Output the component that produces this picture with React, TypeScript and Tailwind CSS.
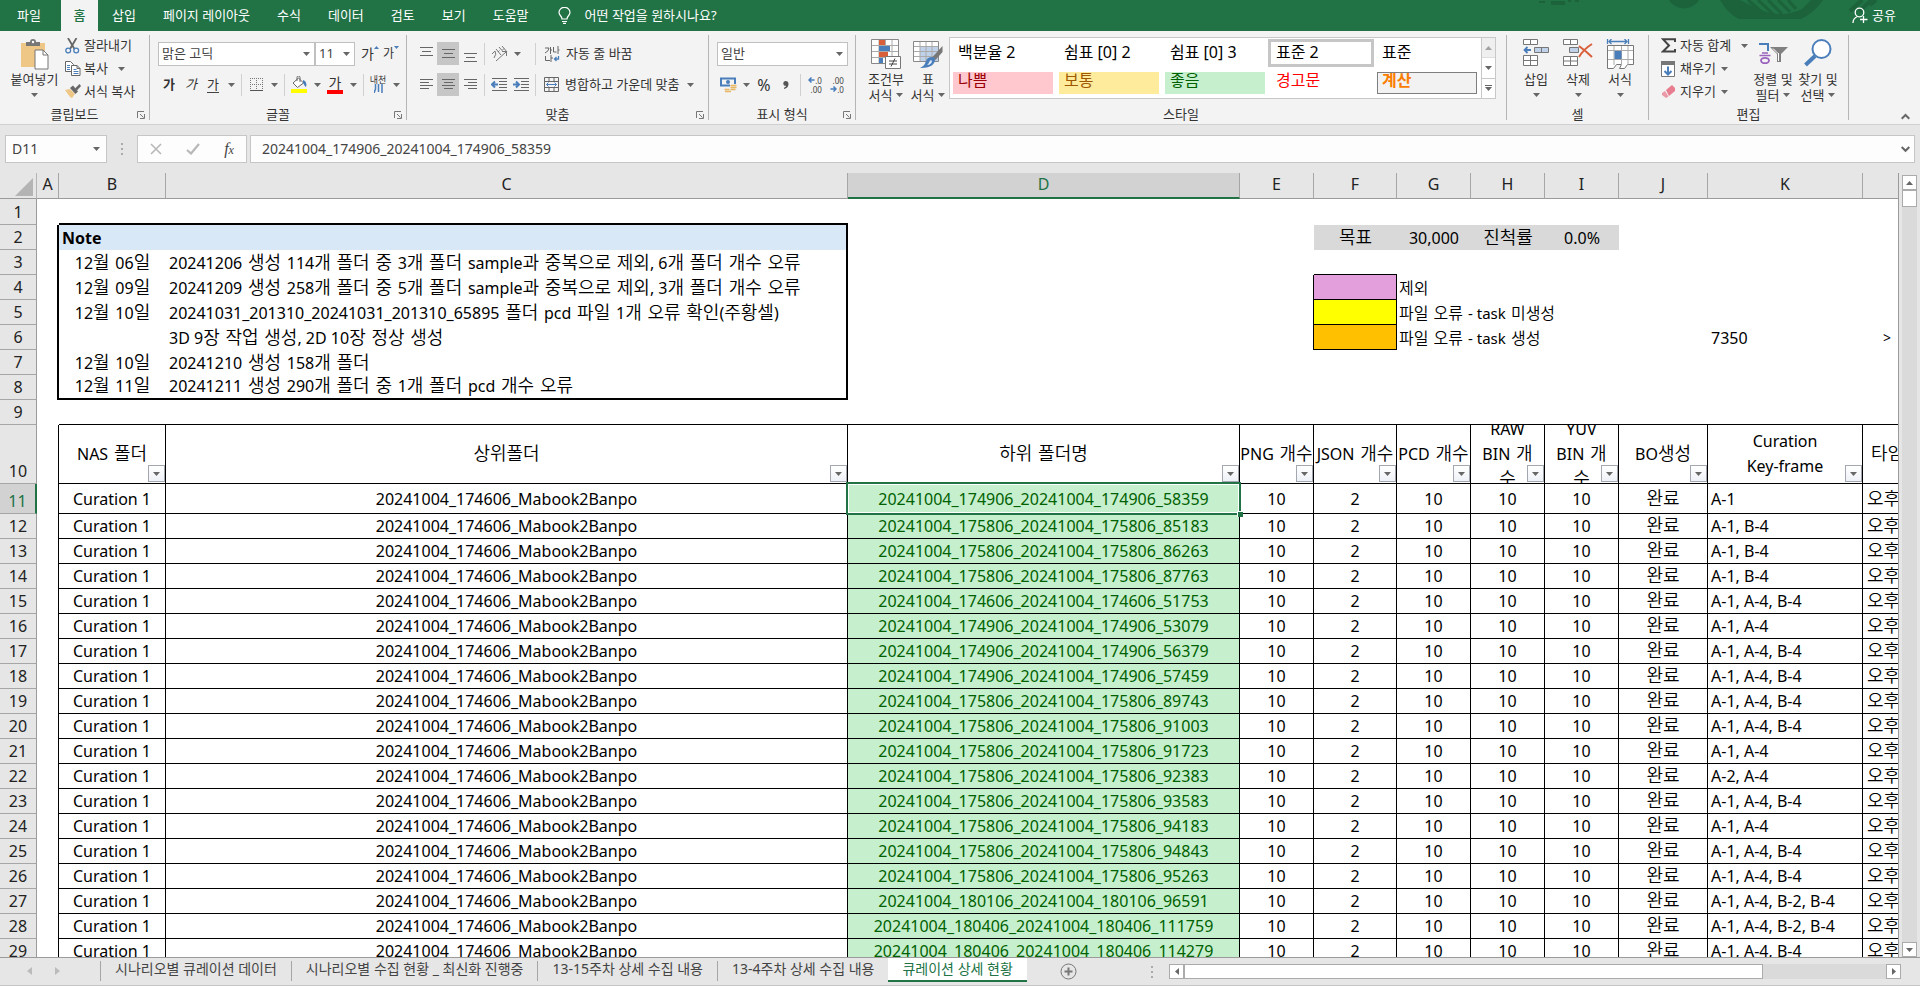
import type { ReactNode } from 'react';

const noteRows: [string, string][] = [
  ['12월 06일', '20241206 생성 114개 폴더 중 3개 폴더 sample과 중복으로 제외, 6개 폴더 개수 오류'],
  ['12월 09일', '20241209 생성 258개 폴더 중 5개 폴더 sample과 중복으로 제외, 3개 폴더 개수 오류'],
  ['12월 10일', '20241031_201310_20241031_201310_65895 폴더 pcd 파일 1개 오류 확인(주황셀)'],
  ['', '3D 9장 작업 생성, 2D 10장 정상 생성'],
  ['12월 10일', '20241210 생성 158개 폴더'],
  ['12월 11일', '20241211 생성 290개 폴더 중 1개 폴더 pcd 개수 오류'],
];

const dataRows: [string, string][] = [
  ['20241004_174906_20241004_174906_58359', 'A-1'],
  ['20241004_175806_20241004_175806_85183', 'A-1, B-4'],
  ['20241004_175806_20241004_175806_86263', 'A-1, B-4'],
  ['20241004_175806_20241004_175806_87763', 'A-1, B-4'],
  ['20241004_174606_20241004_174606_51753', 'A-1, A-4, B-4'],
  ['20241004_174906_20241004_174906_53079', 'A-1, A-4'],
  ['20241004_174906_20241004_174906_56379', 'A-1, A-4, B-4'],
  ['20241004_174906_20241004_174906_57459', 'A-1, A-4, B-4'],
  ['20241004_175806_20241004_175806_89743', 'A-1, A-4, B-4'],
  ['20241004_175806_20241004_175806_91003', 'A-1, A-4, B-4'],
  ['20241004_175806_20241004_175806_91723', 'A-1, A-4'],
  ['20241004_175806_20241004_175806_92383', 'A-2, A-4'],
  ['20241004_175806_20241004_175806_93583', 'A-1, A-4, B-4'],
  ['20241004_175806_20241004_175806_94183', 'A-1, A-4'],
  ['20241004_175806_20241004_175806_94843', 'A-1, A-4, B-4'],
  ['20241004_175806_20241004_175806_95263', 'A-1, A-4, B-4'],
  ['20241004_180106_20241004_180106_96591', 'A-1, A-4, B-2, B-4'],
  ['20241004_180406_20241004_180406_111759', 'A-1, A-4, B-2, B-4'],
  ['20241004_180406_20241004_180406_114279', 'A-1, A-4, B-4'],
];

const headers: string[][] = [
  ['NAS 폴더'],
  ['상위폴더'],
  ['하위 폴더명'],
  ['PNG 개수'],
  ['JSON 개수'],
  ['PCD 개수'],
  ['RAW', 'BIN 개', '수'],
  ['YUV', 'BIN 개', '수'],
  ['BO생성'],
  ['Curation', 'Key-frame'],
];

/* Hangul runs are set a little larger than the Latin text beside them. */
function Mixed({ text, size = 'text-[18px]' }: { text: string; size?: string }) {
  return (
    <span className="whitespace-pre">
      {text.split(/([가-힣 ]*[가-힣][가-힣 ]*)/).map((part, i) =>
        i % 2 ? (
          <span key={i} lang="ko" className={`font-['DejaVu_Sans','Noto_Sans_CJK_KR',sans-serif] leading-none font-[350] ${size}`}>
            {part}
          </span>
        ) : (
          part
        ),
      )}
    </span>
  );
}

function Caret({ up = false }: { up?: boolean }) {
  return (
    <svg width="7" height="4" viewBox="0 0 7 4" className="shrink-0" aria-hidden="true">
      <path d={up ? 'M0 4h7L3.5 0z' : 'M0 0h7L3.5 4z'} fill="#666" />
    </svg>
  );
}

function SizeMark({ up = false }: { up?: boolean }) {
  return (
    <svg width="5" height="3" viewBox="0 0 5 3" className="mt-1 shrink-0" aria-hidden="true">
      <path d={up ? 'M0 3h5L2.500 0z' : 'M0 0h5L2.500 3z'} fill="#4a7ebb" />
    </svg>
  );
}

function Launcher() {
  return (
    <svg width="8" height="8" viewBox="0 0 8 8" fill="none" stroke="#777" aria-hidden="true">
      <path d="M.5 7V.5H7M3 3l3.5 3.5M7.5 3v4.500H3" />
    </svg>
  );
}

function Group({ label, launcher, width, children }: { label: string; launcher?: boolean; width: string; children: ReactNode }) {
  return (
    <>
      <section aria-label={label} className={`flex shrink-0 flex-col ${width}`}>
        <div className="flex h-[74px]">{children}</div>
        <div className="flex h-[19px] items-center leading-[19px]">
          <span className="w-4" />
          <span className="flex-1 text-center">{label}</span>
          <span className="flex w-4 justify-center">
            {launcher && (
              <button type="button" aria-label={`${label} 설정`}>
                <Launcher />
              </button>
            )}
          </span>
        </div>
      </section>
      <div className="my-1 w-px shrink-0 bg-[#b5b5b5]" />
    </>
  );
}

function Tool({ label, active, children }: { label: string; active?: boolean; children: ReactNode }) {
  return (
    <button
      type="button"
      aria-label={label}
      className={`flex h-[23px] w-[22px] shrink-0 items-center justify-center ${active ? 'bg-[#c6c6c6]' : ''}`}
    >
      {children}
    </button>
  );
}

function Drop({ label }: { label: string }) {
  return (
    <button type="button" aria-label={label} className="flex h-[23px] w-[14px] shrink-0 items-center justify-center">
      <Caret />
    </button>
  );
}

function Rule() {
  return <span className="mx-[3px] h-[22px] w-px shrink-0 bg-[#d0d0d0]" />;
}

function BigButton({ lines, width, children, inlineCaret }: { lines: string[]; width: string; children: ReactNode; inlineCaret?: boolean }) {
  return (
    <button type="button" className={`flex shrink-0 flex-col items-center pt-2 leading-[16px] whitespace-nowrap ${width}`}>
      <span className="flex h-[32px] items-start justify-center">{children}</span>
      <span>{lines[0]}</span>
      <span className="flex h-[16px] items-center gap-1">
        {inlineCaret && lines[1]}
        <Caret />
      </span>
    </button>
  );
}

function SmallButton({ text, icon, caret }: { text: string; icon: ReactNode; caret?: string }) {
  return (
    <button type="button" className="flex h-[23px] items-center whitespace-nowrap">
      <span className="flex w-[19px] shrink-0 justify-start">{icon}</span>
      <span>{text}</span>
      {caret && (
        <span className={caret}>
          <Caret />
        </span>
      )}
    </button>
  );
}

function Lines({ rows }: { rows: [number, number, number][] }) {
  return (
    <svg width="15" height="16" viewBox="0 0 15 16" stroke="#666" aria-hidden="true">
      {rows.map(([y, a, b], i) => (
        <path key={i} d={`M${a} ${y + 0.5}H${b}`} />
      ))}
    </svg>
  );
}

function PasteIcon() {
  return (
    <svg width="30" height="31" viewBox="0 0 30 31" aria-hidden="true">
      <path d="M1 4h24v24H1z" fill="#eec685" />
      <path d="M6 7V3h4a3 3 0 0 1 6 0h4v4z" fill="#777" />
      <circle cx="13" cy="3" r="1.200" fill="#fff" />
      <path d="M15 11h8l5 5v14H15z" fill="#fff" stroke="#777" />
      <path d="M23 11v5h5" fill="none" stroke="#777" />
    </svg>
  );
}

function CutIcon() {
  return (
    <svg width="15" height="16" viewBox="0 0 15 16" fill="none" aria-hidden="true">
      <path d="M3 0l6.500 11M11.500 0L5 11" stroke="#666" strokeWidth="1.800" />
      <circle cx="3.200" cy="12.500" r="2.400" stroke="#4a7ebb" strokeWidth="1.300" />
      <circle cx="11.200" cy="12.500" r="2.400" stroke="#4a7ebb" strokeWidth="1.300" />
    </svg>
  );
}

function CopyIcon() {
  return (
    <svg width="16" height="15" viewBox="0 0 16 15" aria-hidden="true">
      <path d="M.5.500h5l3 3v7h-8z" fill="#fff" stroke="#666" />
      <path d="M2 4.500h3M2 6.500h3M2 8.500h3" stroke="#4a7ebb" />
      <path d="M6.500 4.500h5.500l3 3v7H6.500z" fill="#fff" stroke="#666" />
      <path d="M12 4.500v3h3" fill="none" stroke="#666" />
      <path d="M8.500 8.500h3M8.500 10.500h5M8.500 12.500h5" stroke="#4a7ebb" />
    </svg>
  );
}

function BrushIcon() {
  return (
    <svg width="17" height="15" viewBox="0 0 17 15" aria-hidden="true">
      <path d="M0 6l5-1 5 5-3 4-2-1z" fill="#eec685" />
      <path d="M5 4l3-2.500 5 6-2.500 2.500z" fill="#666" />
      <path d="M10 4.500L14.500 0 16 2l-4 4.500z" fill="#666" />
    </svg>
  );
}

function CondIcon() {
  return (
    <svg width="31" height="31" viewBox="0 0 31 31" aria-hidden="true">
      <path d="M.5.500h27v24H.5z" fill="#fff" stroke="#888" />
      <path d="M8 1v23M14.500 1v23M21 1v23M1 6.500h26M1 12.500h26M1 18.500h26" stroke="#aaa" />
      <path d="M8 1h6v5H8zM8 13h9v5H8z" fill="#d95f3b" />
      <path d="M8 7h11v5H8zM8 19h4v5H8z" fill="#4a7ebb" />
      <path d="M14.500 17.500h15v12h-15z" fill="#fff" stroke="#777" />
      <path d="M18 22h8M18 25h8M24 19.500l-4 8" stroke="#444" />
    </svg>
  );
}

function TableIcon() {
  return (
    <svg width="30" height="30" viewBox="0 0 30 30" aria-hidden="true">
      <path d="M.5 2.500h25v20H.5z" fill="#fff" stroke="#888" />
      <path d="M7 7h18v15H7z" fill="#bfd2ea" />
      <path d="M7 3v19M13 3v19M19 3v19M1 7.500h24M1 12.500h24M1 17.500h24" stroke="#aaa" />
      <path d="M29.500 7v6l-7 8-3-3z" fill="#777" />
      <path d="M19 18c3 0 4 3 2 6-2 4-8 5-14 5 4-2 5-4 6-7 1-3 3-4 6-4z" fill="#4a7ebb" />
      <path d="M14 26c2-1 2-4 4-5l1 1c0 2-2 4-5 4z" fill="#dce8f5" />
    </svg>
  );
}

function InsertIcon() {
  return (
    <svg width="28" height="28" viewBox="0 0 28 28" fill="#fff" stroke="#777" aria-hidden="true">
      <path d="M1.500.500h14v5h-14zM8.500.500v5M1.500 16.500h14v10h-14zM1.500 21.500h14M8.500 16.500v10" />
      <path d="M12.500 8.500h14v5h-14zM19.500 8.500v5" fill="#bfd2ea" />
      <path d="M9 11H3M5.500 8L2.500 11l3 3" fill="none" stroke="#4a7ebb" strokeWidth="1.800" />
    </svg>
  );
}

function DeleteIcon() {
  return (
    <svg width="30" height="28" viewBox="0 0 30 28" fill="#fff" stroke="#777" aria-hidden="true">
      <path d="M.5.500h14v5H.5zM7.500.500v5M.5 17.500h14v9H.5zM.5 22h14M7.500 17.500v9" />
      <path d="M6.500 8.500h9v5h-9z" fill="#bfd2ea" />
      <path d="M16 7c4 3 8 6 13 11M29 5c-5 3-10 8-13 13" fill="none" stroke="#d95f3b" strokeWidth="2" />
    </svg>
  );
}

function FormatIcon() {
  return (
    <svg width="29" height="31" viewBox="0 0 29 31" fill="none" aria-hidden="true">
      <path d="M1.500 0v5M22.500 0v5M3 2.500h18M5.500 0L3 2.500 5.500 5M18.500 0L21 2.500 18.500 5" stroke="#4a7ebb" strokeWidth="1.300" />
      <path d="M1.500 6.500h26v19h-6l-3 4h-5l2-4h-5l-3 4h-6z" fill="#fff" stroke="#777" />
      <path d="M8 7v19M15.500 7v19M22 7v19M2 11.500h25M2 20.500h25" stroke="#aaa" />
      <path d="M8.500 12h7v8h-7z" fill="#4a7ebb" />
    </svg>
  );
}

function SortIcon() {
  return (
    <svg width="30" height="30" viewBox="0 0 30 30" fill="none" aria-hidden="true">
      <path d="M1 5h9v7" stroke="#4a7ebb" strokeWidth="2" />
      <path d="M4 14h6M1.500 16.500h11" stroke="#9a63bd" strokeWidth="1.600" />
      <ellipse cx="7" cy="21.500" rx="4" ry="2.700" stroke="#9a63bd" strokeWidth="1.800" />
      <path d="M12 8h18l-7 7v8h-4v-8z" fill="#808080" />
      <path d="M20.500 14v8M15 9.500l5 5" stroke="#fff" />
    </svg>
  );
}

function FindIcon() {
  return (
    <svg width="28" height="28" viewBox="0 0 28 28" fill="none" stroke="#4a7ebb" aria-hidden="true">
      <circle cx="17.500" cy="10" r="9" fill="#fff" strokeWidth="2" />
      <path d="M11 17L1.500 26" strokeWidth="4" />
    </svg>
  );
}

function WrapIcon() {
  return (
    <svg width="16" height="16" viewBox="0 0 16 16" fill="none" aria-hidden="true">
      <path d="M1 2h4q0 3-4 5M6.500 1v7M6.500 4H8M9.500 1v5h3M14 0v8M14 4h1.500M1.500 10v4.500H6M7 9v7M7 12h2" stroke="#666" />
      <path d="M14.500 10v3H11M12.500 11l-2 2 2 2" stroke="#4a7ebb" strokeWidth="1.300" />
    </svg>
  );
}

function MergeIcon() {
  return (
    <svg width="15" height="15" viewBox="0 0 15 15" fill="none" aria-hidden="true">
      <path d="M.5.500h14v14H.5zM.5 4.500h14M.5 10.500h14M5 .5v4M10 .5v4M5 10.500v4M10 10.500v4" stroke="#666" />
      <path d="M2.500 7.500h10M4.500 5.500l-2 2 2 2M10.500 5.500l2 2-2 2" stroke="#4a7ebb" />
    </svg>
  );
}

function IndentIcon({ out }: { out?: boolean }) {
  return (
    <svg width="16" height="14" viewBox="0 0 16 14" fill="none" aria-hidden="true">
      <path d="M1 .5h15M8 3.500h8M8 6.500h8M8 9.500h8M1 12.500h15" stroke="#666" />
      <path d={out ? 'M7 6.500H1.500M4 3.500l-3 3 3 3' : 'M0 6.500h5.500M3 3.500l3 3-3 3'} stroke="#4a7ebb" strokeWidth="2" />
    </svg>
  );
}

function OrientIcon() {
  return (
    <svg width="17" height="16" viewBox="0 0 17 16" fill="none" stroke="#777" aria-hidden="true">
      <path d="M1 8l3-3q2 3-1 7M5 3l5 6M7 6l1.500-1.500M8 1l3 3.500 2-2M11 0l5 6" />
      <path d="M5 15L15 6M11 5.500h4.500V10" />
    </svg>
  );
}

function MoneyIcon() {
  return (
    <svg width="17" height="16" viewBox="0 0 17 16" fill="none" aria-hidden="true">
      <path d="M1 1.500h14v7H1z" stroke="#4a7ebb" strokeWidth="2" />
      <circle cx="8" cy="5" r="2" fill="#4a7ebb" />
      <path d="M10 7h6v5h-3v3H5v-3h5z" fill="#f3f3f3" />
      <path d="M10.500 8.500h6M10.500 10.500h6M10.500 12.500h5M4.500 12.500h5M5 14.500h6" stroke="#e8b765" strokeWidth="1.500" />
    </svg>
  );
}

function DecimalIcon({ add }: { add?: boolean }) {
  const arrow = (
    <svg width="7" height="6" viewBox="0 0 7 6" fill="none" stroke="#4a7ebb" strokeWidth="1.500" aria-hidden="true">
      <path d={add ? 'M6.500 3H1.500M3.500.500L1 3l2.500 2.500' : 'M.5 3h5M3.500.500L6 3 3.500 5.500'} />
    </svg>
  );
  return (
    <span className="flex flex-col items-end text-[8px] leading-[9px] text-[#444]">
      <span className="flex items-center">
        {add && arrow}
        {add ? '.0' : '.00'}
      </span>
      <span className="flex items-center">
        {!add && arrow}
        {add ? '.00' : '.0'}
      </span>
    </span>
  );
}

function BucketIcon() {
  return (
    <svg width="17" height="17" viewBox="0 0 17 17" aria-hidden="true">
      <path d="M2 7l5.500-5 5 5-6 4.500z" fill="#fff" stroke="#666" />
      <path d="M6 5V1.500a1.500 1.500 0 0 1 3 0V6" fill="none" stroke="#666" />
      <path d="M12 4c3 1 4 4 3 7-1 0-2-3-3-4z" fill="#4a7ebb" />
      <path d="M0 13h16v4H0z" fill="#ff0" />
    </svg>
  );
}

function BorderIcon() {
  return (
    <svg width="13" height="13" viewBox="0 0 13 13" fill="none" aria-hidden="true">
      <path d="M.5 0v11M6.500 0v11M12.500 0v11M0 .5h13M0 6.500h13" stroke="#777" strokeDasharray="1 1" />
      <path d="M0 12.500h13" stroke="#555" />
    </svg>
  );
}

function TitleBar() {
  const tabs = ['삽입', '페이지 레이아웃', '수식', '데이터', '검토', '보기', '도움말'];
  return (
    <header className="relative flex h-[31px] shrink-0 items-stretch bg-[#217346] text-white">
      <svg className="absolute top-0 right-[30px] h-[20px] w-[360px]" viewBox="0 0 360 20" fill="none" stroke="#1c623b" aria-hidden="true">
        <path d="M9 2h6M22 2h12v2H22zM38 1h3M45 1h4" strokeWidth="2" />
        <circle cx="154" cy="-9" r="13" strokeWidth="9" />
        <path d="M190 0q7 13 19 19h62q13-6 22-19h-12l-9 9q-20 10-44 0l-18-9z" fill="#1c623b" stroke="none" />
        <path d="M218 0l16 14M228 0l15 14M238 0l14 14M248 0l12 12M258 0l8 9" strokeWidth="3" />
        <path d="M320 11L332 0M329 11L342 0M340 5l6-5" strokeWidth="4" />
      </svg>
      <nav className="relative flex flex-1 items-stretch whitespace-nowrap">
        <button type="button" className="w-[61px] pr-[3px]">파일</button>
        <button type="button" className="w-[37px] bg-[#f3f3f3] font-medium text-[#217346]">홈</button>
        {tabs.map((t) => (
          <button key={t} type="button" className="pr-[13px] pl-[14px]">{t}</button>
        ))}
        <button type="button" className="ml-4 flex items-center gap-[14px]">
          <svg width="13" height="17" viewBox="0 0 13 17" fill="none" stroke="#fff" strokeWidth="1.200" aria-hidden="true">
            <path d="M4 12C4 9 1 8.500 1 5.500a5.300 5 0 0 1 11 0C12 8.500 9 9 9 12zM4 14.500h5M5 16.400h3" />
          </svg>
          어떤 작업을 원하시나요?
        </button>
      </nav>
      <button type="button" className="relative flex items-center gap-1 pr-6">
        <svg width="16" height="17" viewBox="0 0 16 17" fill="none" stroke="#fff" strokeWidth="1.300" aria-hidden="true">
          <circle cx="7.500" cy="5.500" r="4.300" />
          <path d="M1 16c0-3 2-5.500 4.500-6.500M11.500 9v7M8 12.500h7.500" />
        </svg>
        공유
      </button>
    </header>
  );
}

function Select({ label, value, width }: { label: string; value: string; width: string }) {
  return (
    <div className={`relative h-[24px] shrink-0 border border-[#c0c0c0] bg-white ${width}`}>
      <select aria-label={label} defaultValue={value} className="h-full w-full appearance-none bg-transparent pl-[3px] text-[13px] text-[#444] outline-none">
        <option>{value}</option>
      </select>
      <span className="pointer-events-none absolute top-[9px] right-[4px]">
        <Caret />
      </span>
    </div>
  );
}

function StyleGallery() {
  const top = 'flex h-[22px] w-[100px] items-start pl-[5px] text-[16px] leading-[20px]';
  const low = 'flex h-[22px] w-[100px] items-start pl-[5px] text-[16px] leading-[17px]';
  return (
    <div className="mt-[6px] flex h-[62px] flex-1 border border-[#c8c8c8] bg-white">
      <div className="flex flex-1 flex-col gap-[8px] pt-[4px] pl-[3px] text-black">
        <div className="flex gap-[6px]">
          <button type="button" className={top}>백분율 2</button>
          <button type="button" className={top}>쉼표 [0] 2</button>
          <button type="button" className={top}>쉼표 [0] 3</button>
          <button type="button" className={`${top} outline-3 outline-[#c6c6c6]`}>표준 2</button>
          <button type="button" className={top}>표준</button>
        </div>
        <div className="flex gap-[6px]">
          <button type="button" className={`${low} bg-[#ffc7ce] text-[#9c0006]`}>나쁨</button>
          <button type="button" className={`${low} bg-[#ffeb9c] text-[#9c5700]`}>보통</button>
          <button type="button" className={`${low} bg-[#c6efce] text-[#006100]`}>좋음</button>
          <button type="button" className={`${low} text-[#ff0000]`}>경고문</button>
          <button type="button" className={`${low} bg-[#f2f2f2] font-bold text-[#fa7d00] outline-1 -outline-offset-1 outline-[#7f7f7f]`}>계산</button>
        </div>
      </div>
      <div className="flex w-[14px] flex-col divide-y divide-[#c8c8c8] border-l border-[#c8c8c8]">
        <button type="button" aria-label="위로" className="flex flex-1 items-center justify-center bg-[#e6e6e6] opacity-60"><Caret up /></button>
        <button type="button" aria-label="아래로" className="flex flex-1 items-center justify-center"><Caret /></button>
        <button type="button" aria-label="자세히" className="flex flex-1 flex-col items-center justify-center gap-px">
          <span className="h-px w-[7px] bg-[#666]" />
          <Caret />
        </button>
      </div>
    </div>
  );
}

function Ribbon() {
  return (
    <div className="flex h-[94px] shrink-0 border-b border-[#d0d0d0] bg-[#f3f3f3]">
      <Group label="클립보드" launcher width="w-[149px]">
        <BigButton lines={['붙여넣기']} width="w-[65px] pl-1"><PasteIcon /></BigButton>
        <div className="flex flex-col pt-[3px]">
          <SmallButton text="잘라내기" icon={<CutIcon />} />
          <SmallButton text="복사" icon={<CopyIcon />} caret="ml-[10px]" />
          <SmallButton text="서식 복사" icon={<BrushIcon />} />
        </div>
      </Group>
      <Group label="글꼴" launcher width="w-[256px]">
        <div className="flex flex-col gap-[7px] pt-[11px] pl-2">
          <div className="flex items-center">
            <Select label="글꼴 이름" value="맑은 고딕" width="w-[157px]" />
            <Select label="글꼴 크기" value="11" width="w-[40px]" />
            <button type="button" aria-label="글꼴 크게" className="ml-[6px] flex w-[22px] items-start text-[14px] leading-[24px]">
              가<SizeMark up />
            </button>
            <button type="button" aria-label="글꼴 작게" className="flex w-[20px] items-start text-[12px] leading-[24px]">
              가<SizeMark />
            </button>
          </div>
          <div className="flex items-center">
            <Tool label="굵게"><b>가</b></Tool>
            <Tool label="기울임꼴"><i>가</i></Tool>
            <Tool label="밑줄"><span className="border-b border-[#444] leading-[16px]">가</span></Tool>
            <Drop label="밑줄 종류" />
            <Rule />
            <Tool label="테두리"><BorderIcon /></Tool>
            <Drop label="테두리 종류" />
            <Rule />
            <Tool label="채우기 색"><BucketIcon /></Tool>
            <Drop label="채우기 색 선택" />
            <Tool label="글꼴 색">
              <span className="w-4 border-b-4 border-[#f00] text-center text-[14px] leading-[14px]">가</span>
            </Tool>
            <Drop label="글꼴 색 선택" />
            <Rule />
            <Tool label="윗주">
              <span className="flex flex-col items-center">
                <span className="text-[9px] leading-[8px] whitespace-nowrap">내천</span>
                <svg width="9" height="9" viewBox="0 0 9 9" fill="none" stroke="#4a7ebb" strokeWidth="1.500" aria-hidden="true">
                  <path d="M1.500 0v5L0 9M4.500 0v8M8 0v9" />
                </svg>
              </span>
            </Tool>
            <Drop label="윗주 설정" />
          </div>
        </div>
      </Group>
      <Group label="맞춤" launcher width="w-[301px]">
        <div className="flex flex-col gap-[8px] pt-[11px] pl-2">
          <div className="flex items-center">
            <Tool label="위쪽 맞춤"><Lines rows={[[1, 1, 14], [5, 3, 12], [9, 1, 14]]} /></Tool>
            <Tool label="가운데 맞춤" active><Lines rows={[[3, 1, 14], [7, 3, 12], [11, 1, 14]]} /></Tool>
            <Tool label="아래쪽 맞춤"><Lines rows={[[7, 1, 14], [11, 3, 12], [15, 1, 14]]} /></Tool>
            <Rule />
            <Tool label="방향"><OrientIcon /></Tool>
            <Drop label="방향 선택" />
            <span className="w-2" />
            <Rule />
            <button type="button" className="flex items-center gap-[6px] pl-[5px] whitespace-nowrap"><WrapIcon />자동 줄 바꿈</button>
          </div>
          <div className="flex items-center">
            <Tool label="왼쪽 맞춤"><Lines rows={[[2, 1, 14], [5, 1, 10], [8, 1, 14], [11, 1, 10]]} /></Tool>
            <Tool label="텍스트 가운데" active><Lines rows={[[2, 1, 14], [5, 3, 12], [8, 1, 14], [11, 3, 12]]} /></Tool>
            <Tool label="오른쪽 맞춤"><Lines rows={[[2, 1, 14], [5, 5, 14], [8, 1, 14], [11, 5, 14]]} /></Tool>
            <Rule />
            <Tool label="내어쓰기"><IndentIcon out /></Tool>
            <Tool label="들여쓰기"><IndentIcon /></Tool>
            <Rule />
            <button type="button" className="flex items-center gap-[6px] pr-1 pl-[5px] whitespace-nowrap"><MergeIcon />병합하고 가운데 맞춤</button>
            <Drop label="병합 종류" />
          </div>
        </div>
      </Group>
      <Group label="표시 형식" launcher width="w-[146px]">
        <div className="flex flex-col gap-[7px] pt-[11px] pl-2">
          <Select label="표시 형식" value="일반" width="w-[131px]" />
          <div className="flex items-center">
            <Tool label="회계 형식"><MoneyIcon /></Tool>
            <Drop label="회계 형식 선택" />
            <Tool label="백분율"><span className="text-[16px]">%</span></Tool>
            <Tool label="쉼표">
              <svg width="6" height="8" viewBox="0 0 6 8" aria-hidden="true">
                <path d="M2.500 0C4.500 0 5.500 1.200 5.500 3c0 2.500-1.500 4.300-4.500 5V6.800C2.500 6.300 3 5.600 3 4.800 1.500 5 .3 4 .3 2.500.3 1 1.200 0 2.500 0z" fill="#555" />
              </svg>
            </Tool>
            <Rule />
            <Tool label="자릿수 늘림"><DecimalIcon add /></Tool>
            <Tool label="자릿수 줄임"><DecimalIcon /></Tool>
          </div>
        </div>
      </Group>
      <Group label="스타일" width="w-[650px]">
        <div className="flex flex-1 pr-[10px] pl-[9px]">
          <BigButton lines={['조건부', '서식']} width="w-[42px]" inlineCaret><CondIcon /></BigButton>
          <BigButton lines={['표', '서식']} width="w-[42px]" inlineCaret><TableIcon /></BigButton>
          <StyleGallery />
        </div>
      </Group>
      <Group label="셀" width="w-[141px]">
        <div className="flex pl-2">
          <BigButton lines={['삽입']} width="w-[42px]"><InsertIcon /></BigButton>
          <BigButton lines={['삭제']} width="w-[42px]"><DeleteIcon /></BigButton>
          <BigButton lines={['서식']} width="w-[42px]"><FormatIcon /></BigButton>
        </div>
      </Group>
      <Group label="편집" width="w-[199px]">
        <div className="flex w-[90px] flex-col pt-[3px] pl-3">
          <SmallButton
            text="자동 합계"
            caret="ml-[10px]"
            icon={
              <svg width="15" height="15" viewBox="0 0 15 15" fill="none" stroke="#444" aria-hidden="true">
                <path d="M14 4V1.200H2L8 7.500l-6 6h12V11" strokeWidth="2" />
              </svg>
            }
          />
          <SmallButton
            text="채우기"
            caret="ml-[5px]"
            icon={
              <svg width="15" height="16" viewBox="0 0 15 16" aria-hidden="true">
                <path d="M.5.500h13v15H.5z" fill="#fff" stroke="#777" />
                <path d="M0 0h14v4H0z" fill="#777" />
                <path d="M7 5.500v8M3.500 10L7 13.500l3.500-3.500" fill="none" stroke="#4a7ebb" strokeWidth="2" />
              </svg>
            }
          />
          <SmallButton
            text="지우기"
            caret="ml-[5px]"
            icon={
              <svg width="15" height="13" viewBox="0 0 15 13" aria-hidden="true">
                <path d="M5 5l6-5 3 3v3L8 11z" fill="#e87d8f" />
                <path d="M4 6l3.500 5.500L5 13 1 10V8z" fill="#eb99a6" />
              </svg>
            }
          />
        </div>
        <div className="flex pl-[11px]">
          <BigButton lines={['정렬 및', '필터']} width="w-[46px]" inlineCaret><SortIcon /></BigButton>
          <BigButton lines={['찾기 및', '선택']} width="w-[44px]" inlineCaret><FindIcon /></BigButton>
        </div>
      </Group>
      <div className="flex flex-1 items-end justify-end pr-[10px] pb-1">
        <button type="button" aria-label="리본 메뉴 축소">
          <svg width="9" height="7" viewBox="0 0 9 7" fill="none" stroke="#666" strokeWidth="2" aria-hidden="true">
            <path d="M.7 5.700L4.500 2l3.800 3.700" />
          </svg>
        </button>
      </div>
    </div>
  );
}

function Dots() {
  return (
    <span className="flex flex-col gap-[3px]">
      <i className="h-[2px] w-[2px] bg-[#aaa]" />
      <i className="h-[2px] w-[2px] bg-[#aaa]" />
      <i className="h-[2px] w-[2px] bg-[#aaa]" />
    </span>
  );
}

function FormulaBar() {
  return (
    <div className="flex h-[48px] shrink-0 items-start pt-[10px] pr-[5px] pl-[5px] text-[14px]">
      <div className="flex h-[28px] w-[102px] items-center border border-[#c6c6c6] bg-[#fdfdfd] pr-[6px]">
        <input aria-label="이름 상자" defaultValue="D11" className="w-full min-w-0 bg-transparent pb-[2px] pl-[6px] text-[#444] outline-none" />
        <Caret />
      </div>
      <span className="flex h-[28px] w-[30px] items-center justify-center"><Dots /></span>
      <div className="flex h-[28px] w-[110px] items-center justify-around border border-[#c6c6c6] bg-[#fdfdfd]">
        <button type="button" aria-label="취소">
          <svg width="12" height="12" viewBox="0 0 12 12" stroke="#b8b8b8" strokeWidth="1.600" aria-hidden="true"><path d="M1 1l10 10M11 1L1 11" /></svg>
        </button>
        <button type="button" aria-label="입력">
          <svg width="14" height="12" viewBox="0 0 14 12" fill="none" stroke="#b8b8b8" strokeWidth="2.200" aria-hidden="true"><path d="M1 7l4 3.500L13 1" /></svg>
        </button>
        <button type="button" aria-label="함수 삽입" className="font-['Liberation_Serif',serif] text-[16px] text-[#444] italic">
          f<span className="text-[12px]">x</span>
        </button>
      </div>
      <div className="ml-[3px] flex h-[28px] flex-1 items-center border border-[#c6c6c6] bg-[#fdfdfd] pr-1">
        <input aria-label="수식 입력줄" defaultValue="20241004_174906_20241004_174906_58359" className="w-full bg-transparent pb-[2px] pl-[11px] text-[#444] outline-none" />
        <button type="button" aria-label="수식 입력줄 확장">
          <svg width="9" height="7" viewBox="0 0 9 7" fill="none" stroke="#666" strokeWidth="2" aria-hidden="true"><path d="M.7 1L4.500 4.800 8.300 1" /></svg>
        </button>
      </div>
    </div>
  );
}

function RowHead({ n, active }: { n: number; active?: boolean }) {
  return (
    <th
      scope="row"
      className={`border-b border-[#a6a6a6] p-0 align-bottom font-normal leading-[24px] ${
        active ? 'border-r-2 border-r-[#217346] bg-[#d2d2d2] text-[#217346]' : 'border-r border-r-[#9b9b9b] bg-[#e6e6e6] text-[#222]'
      }`}
    >
      {n}
    </th>
  );
}

/* Empty cells from the given list of class names. */
function Blank({ classes }: { classes: string[] }) {
  return (
    <>
      {classes.map((c, i) => (
        <td key={i} className={c} />
      ))}
    </>
  );
}

const blanks = (n: number) => Array.from({ length: n }, () => '');

function FilterButton({ name }: { name: string }) {
  return (
    <button
      type="button"
      aria-label={`${name} 필터`}
      className="absolute right-0 bottom-px flex h-[17px] w-[17px] items-center justify-center border border-[#a3a8b0] bg-linear-to-b from-white to-[#eef1f7]"
    >
      <Caret />
    </button>
  );
}

const cols = ['A', 'B', 'C', 'D', 'E', 'F', 'G', 'H', 'I', 'J', 'K', ''];

function Sheet() {
  const box = 'border-r border-b border-black p-0 text-center';
  return (
    <table className="w-full table-fixed border-separate border-spacing-0 bg-white text-[16px] leading-[24px] whitespace-nowrap text-black">
      <colgroup>
        <col className="w-[37px]" />
        <col className="w-[22px]" />
        <col className="w-[107px]" />
        <col className="w-[682px]" />
        <col className="w-[392px]" />
        <col className="w-[74px]" />
        <col className="w-[83px]" />
        <col className="w-[74px]" />
        <col className="w-[74px]" />
        <col className="w-[74px]" />
        <col className="w-[89px]" />
        <col className="w-[155px]" />
        <col />
      </colgroup>
      <thead>
        <tr className="h-[26px]">
          <th aria-label="모두 선택" className="border-r border-b border-r-[#b5b5b5] border-b-[#9b9b9b] bg-[#e6e6e6] p-0">
            <svg width="18" height="18" viewBox="0 0 18 18" className="mt-[3px] ml-[15px]" aria-hidden="true">
              <path d="M18 0v18H0z" fill="#b4b4b4" />
            </svg>
          </th>
          {cols.map((c, i) => (
            <th
              key={i}
              scope="col"
              className={`p-0 align-top font-normal leading-[22px] ${
                c === 'D'
                  ? 'border-r border-b-2 border-r-[#a6a6a6] border-b-[#217346] bg-[#d2d2d2] text-[#217346]'
                  : c === ''
                    ? 'border-b border-[#9b9b9b] bg-[#e6e6e6]'
                    : 'border-r border-b border-r-[#a6a6a6] border-b-[#9b9b9b] bg-[#e6e6e6] text-[#222]'
              }`}
            >
              {c}
            </th>
          ))}
        </tr>
      </thead>
      <tbody>
        <tr className="h-[26px]">
          <RowHead n={1} />
          <Blank classes={['', 'border-b-2 border-black', 'border-b-2 border-black', ...blanks(9)]} />
        </tr>
        <tr className="h-[25px]">
          <RowHead n={2} />
          <td className="border-r-2 border-black" />
          <td colSpan={2} className="border-r-2 border-black bg-[#d9e8f7] p-0 pl-[3px] font-bold">Note</td>
          <Blank classes={blanks(2)} />
          <td className="bg-[#d9d9d9] p-0 text-center"><Mixed text="목표" /></td>
          <td className="bg-[#d9d9d9] p-0 text-center">30,000</td>
          <td className="bg-[#d9d9d9] p-0 text-center"><Mixed text="진척률" /></td>
          <td className="bg-[#d9d9d9] p-0 text-center">0.0%</td>
          <Blank classes={blanks(3)} />
        </tr>
        {noteRows.map(([date, text], i) => {
          const bottom = i === 5 ? 'border-b-2 leading-[23px]' : '';
          const legend = [
            null,
            ['bg-[#e39fdc]', '제외'],
            ['bg-[#ffff00]', '파일 오류 - task 미생성'],
            ['bg-[#ffc000]', '파일 오류 - task 생성'],
          ][i];
          return (
            <tr key={i} className="h-[25px]">
              <RowHead n={i + 3} />
              <td className="border-r-2 border-black" />
              <td className={`border-black p-0 text-center ${bottom}`}><Mixed text={date} /></td>
              <td className={`border-r-2 border-black p-0 pl-[3px] ${bottom}`}><Mixed text={text} /></td>
              <td />
              {legend ? (
                <>
                  <td className="border-r border-black" />
                  <td className={`border-r border-b border-black ${legend[0]}`} />
                  <td colSpan={4} className="p-0 pl-[2px] text-[15px]"><Mixed text={legend[1]} size="text-[16px]" /></td>
                </>
              ) : (
                <Blank classes={['', i === 0 ? 'border-b border-black' : '', ...blanks(4)]} />
              )}
              <td className="p-0 pl-[3px]">{i === 3 ? '7350' : ''}</td>
              <td className="p-0 pr-[7px] text-right text-[14px]">{i === 3 ? '>' : ''}</td>
            </tr>
          );
        })}
        <tr className="h-[25px]">
          <RowHead n={9} />
          <Blank classes={['', ...Array.from({ length: 11 }, () => 'border-b border-black')]} />
        </tr>
        <tr className="h-[59px]">
          <RowHead n={10} />
          <td className="border-r border-black" />
          {headers.map((lines, i) => (
            <td key={i} className={`relative ${box}`}>
              <div className="flex h-[58px] flex-col items-center justify-center overflow-hidden leading-[25px]">
                {lines.map((l) => (
                  <div key={l} className="h-[25px] shrink-0"><Mixed text={l} /></div>
                ))}
              </div>
              <FilterButton name={lines.join(' ')} />
            </td>
          ))}
          <td className="overflow-hidden border-b border-black p-0 pl-2"><Mixed text="타임" /></td>
        </tr>
        {dataRows.map(([folder, key], i) => (
          <tr key={i} className={i === 0 ? 'h-[30px]' : 'h-[25px]'}>
            <RowHead n={i + 11} active={i === 0} />
            <td className="border-r border-black" />
            <td className={box}>Curation 1</td>
            <td className={box}>20241004_174606_Mabook2Banpo</td>
            <td className={`relative bg-[#c6efce] text-[#006100] ${box}`}>
              {folder}
              {i === 0 && (
                <span className="absolute -top-[2px] -right-[2px] -bottom-[2px] -left-[2px] z-10 border-2 border-[#217346] shadow-[inset_0_0_0_1px_white]">
                  <span className="absolute -right-[4px] -bottom-[4px] h-[6px] w-[6px] border-t border-l border-white bg-[#217346]" />
                </span>
              )}
            </td>
            <td className={box}>10</td>
            <td className={box}>2</td>
            <td className={box}>10</td>
            <td className={box}>10</td>
            <td className={box}>10</td>
            <td className={box}><Mixed text="완료" /></td>
            <td className="border-r border-b border-black p-0 pl-[3px]">{key}</td>
            <td className="overflow-hidden border-b border-black p-0 pl-1"><Mixed text="오후" /></td>
          </tr>
        ))}
      </tbody>
    </table>
  );
}

function SheetTabs() {
  const tabs = ['시나리오별 큐레이션 데이터', '시나리오별 수집 현황 _ 최신화 진행중', '13-15주차 상세 수집 내용', '13-4주차 상세 수집 내용'];
  return (
    <footer className="flex h-[29px] shrink-0 items-start border-t border-b border-t-[#9b9b9b] border-b-[#c6c6c6] text-[14px] whitespace-nowrap text-[#444]">
      <div className="flex h-[25px] w-[100px] items-center gap-[23px] pl-[27px]">
        <button type="button" aria-label="이전 시트">
          <svg width="5" height="8" viewBox="0 0 5 8" aria-hidden="true"><path d="M5 0v8L0 4z" fill="#bbb" /></svg>
        </button>
        <button type="button" aria-label="다음 시트">
          <svg width="5" height="8" viewBox="0 0 5 8" aria-hidden="true"><path d="M0 0v8l5-4z" fill="#bbb" /></svg>
        </button>
      </div>
      {tabs.map((t) => (
        <button key={t} type="button" className="mt-[3px] h-[20px] border-l border-[#a6a6a6] px-[14px] pb-1 leading-[16px]">{t}</button>
      ))}
      <button type="button" className="h-[24px] border-b-2 border-[#217346] bg-white px-[14px] pb-[2px] text-[#217346]">큐레이션 상세 현황</button>
      <button type="button" aria-label="새 시트" className="mt-[5px] ml-[33px]">
        <svg width="17" height="17" viewBox="0 0 17 17" fill="none" stroke="#777" aria-hidden="true">
          <circle cx="8.500" cy="8.500" r="7.500" />
          <path d="M8.500 4.500v8M4.500 8.500h8" strokeWidth="2" />
        </svg>
      </button>
      <div className="flex flex-1 items-center justify-end gap-4 pt-[6px] pr-[19px]">
        <Dots />
        <div className="flex h-[15px] w-[732px] items-stretch bg-[#dadada]">
          <button type="button" aria-label="왼쪽으로" className="flex w-[15px] items-center justify-center border border-[#ababab] bg-white">
            <svg width="4" height="7" viewBox="0 0 4 7" aria-hidden="true"><path d="M4 0v7L0 3.500z" fill="#666" /></svg>
          </button>
          <div className="w-[579px] border border-[#ababab] bg-white" />
          <div className="flex-1" />
          <button type="button" aria-label="오른쪽으로" className="flex w-[15px] items-center justify-center border border-[#ababab] bg-white">
            <svg width="4" height="7" viewBox="0 0 4 7" aria-hidden="true"><path d="M0 0v7l4-3.500z" fill="#666" /></svg>
          </button>
        </div>
      </div>
    </footer>
  );
}

export default function App() {
  return (
    <div className="flex h-screen flex-col overflow-hidden bg-[#e6e6e6] font-['Noto_Sans','Noto_Sans_CJK_KR',sans-serif] text-[13px] text-[#333]">
      <TitleBar />
      <Ribbon />
      <FormulaBar />
      <main className="flex min-h-0 flex-1">
        <div className="min-w-0 flex-1 overflow-hidden border-r border-[#9b9b9b]">
          <Sheet />
        </div>
        <div className="flex w-[21px] flex-col pt-[2px] pr-[3px] pl-[3px]">
          <button type="button" aria-label="위로 스크롤" className="flex h-[15px] items-center justify-center border border-[#ababab] bg-white"><Caret up /></button>
          <div className="flex-1 bg-[#dadada]">
            <div className="h-[17px] border border-[#ababab] bg-white" />
          </div>
          <button type="button" aria-label="아래로 스크롤" className="flex h-[15px] items-center justify-center border border-[#ababab] bg-white"><Caret /></button>
        </div>
      </main>
      <SheetTabs />
    </div>
  );
}
